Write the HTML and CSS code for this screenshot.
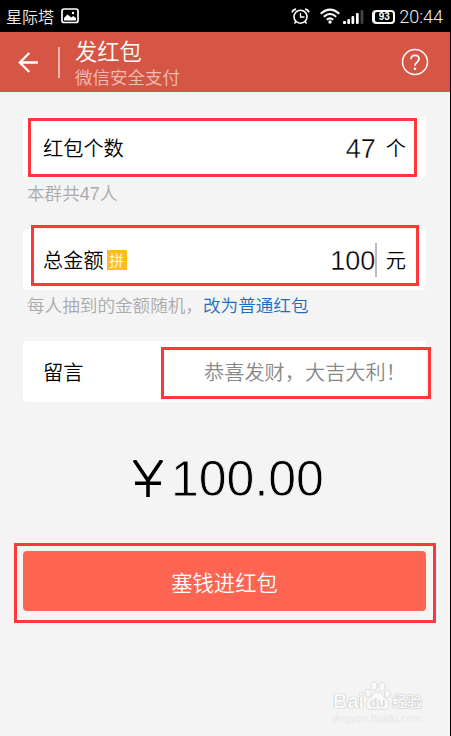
FILE: index.html
```html
<!DOCTYPE html>
<html lang="zh-CN">
<head>
<meta charset="utf-8">
<title>发红包</title>
<link rel="stylesheet" href="styles.css">
</head>
<body>
<div class="phone">
  <div class="status">
    <span class="carrier">星际塔</span>
    <svg class="photo" width="18" height="16" viewBox="0 0 18 16"><rect x="1" y="1" width="16" height="13.5" rx="2" fill="none" stroke="#fff" stroke-width="1.7"/><path d="M3 12V10l3.5-3.5 3.7 3 2-1.5L15 10v2.5H3z" fill="#fff"/><circle cx="12" cy="5" r="1.2" fill="#fff"/></svg>
    <svg class="alarm" width="19" height="17" viewBox="0 0 19 17" fill="none" stroke="#fff"><circle cx="9.5" cy="8.7" r="6.5" stroke-width="1.6"/><path d="M9.5 5v4h4" stroke-width="1.3"/><path d="M1 4.4Q2 1.6 5 1.2M18 4.4Q17 1.6 14 1.2" stroke-width="1.7"/><path d="M5 13.5l-1.5 2M14 13.5l1.5 2" stroke-width="1.5"/></svg>
    <svg class="wifi" width="20" height="16" viewBox="0 0 20 16" fill="none" stroke="#fff" stroke-width="2"><path d="M.7 5.7Q10-2.5 19.3 5.7M3.8 8.8Q10 3.2 16.2 8.8M6.8 11.7Q10 9 13.2 11.7"/><circle cx="10" cy="14" r="1.7" fill="#fff" stroke="none"/></svg>
    <svg class="signal" width="21" height="15" viewBox="0 0 21 15" fill="#fff"><rect y="12" width="3" height="3" rx="1"/><rect x="4.3" y="10" width="2.7" height="5" rx="1"/><rect x="8.5" y="7" width="2.7" height="8" rx="1"/><rect x="13" y="4" width="2.7" height="11" rx="1"/><rect x="17.6" y="1" width="2.8" height="14" rx="1" fill="#444"/></svg>
    <span class="battery">93</span>
    <span class="clock">20:44</span>
  </div>
  <header class="bar">
    <svg class="back" width="21" height="21" viewBox="0 0 21 21" fill="none" stroke="#fff" stroke-width="2.3"><path d="M20 10.5H2M11.3 1L1.8 10.5l9.5 9.5"/></svg>
    <span class="divider"></span>
    <div class="titles"><h1>发红包</h1><p>微信安全支付</p></div>
    <svg class="help" width="28" height="28" viewBox="0 0 28 28" fill="none" stroke="#fff"><circle cx="14" cy="14" r="12.5" stroke-width="1.5"/><path d="M10 11.2Q10 7.3 14 7.3T18 11Q18 12.8 16 14.3T14 17.7" stroke-width="1.7"/><circle cx="14" cy="20.7" r="1.3" fill="#fff" stroke="none"/></svg>
  </header>
  <main>
    <section class="card count">
      <span>红包个数</span><span class="num">47</span><span class="unit">个</span>
      <i class="mark mark-count"></i>
    </section>
    <p class="hint">本群共<span class="digits">47</span>人</p>
    <section class="card total">
      <span>总金额</span><b class="tag">拼</b><span class="num">100</span><i class="caret"></i><span class="unit">元</span>
      <i class="mark mark-total"></i>
    </section>
    <p class="hint">每人抽到的金额随机，<a>改为普通红包</a></p>
    <section class="card note">
      <span>留言</span><span class="wish">恭喜发财，大吉大利！</span>
      <i class="mark mark-note"></i>
    </section>
    <div class="amount"><svg width="30" height="37" viewBox="0 0 30 37" fill="none" stroke="#000" stroke-width="3.6"><path d="M1.2 0L15 20.5 28.8 0M15 20v17M2 23.2h26"/></svg><span>100.00</span></div>
    <div class="submit">塞钱进红包<i class="mark mark-submit"></i></div>
  </main>
  <div class="watermark">
    <div class="brand"><span class="latin">Bai</span><svg width="27" height="30" viewBox="0 0 27 30" fill="#f9f9f9" stroke="#ddd" stroke-width="1"><ellipse cx="4" cy="12" rx="3" ry="4"/><ellipse cx="10" cy="5" rx="3" ry="4.3"/><ellipse cx="18" cy="5.5" rx="3" ry="4.3"/><ellipse cx="23.5" cy="13" rx="3" ry="4"/><path d="M13.5 11C9 11 8 16 4.5 18.500C0 22 2 29 7 28.500Q13.500 27 20 28.500C25 29 27 22 22.500 18.500C19 16 18 11 13.500 11Z"/><text x="13.500" y="26" text-anchor="middle">du</text></svg><span class="cn">经验</span></div>
    <div class="site">jingyan.baidu.com</div>
  </div>
</div>
</body>
</html>
```
FILE: styles.css
```css
* { box-sizing: border-box; }
body, h1, p { margin: 0; font-weight: 350; }
body {
  width: 451px;
  height: 736px;
  overflow: hidden;
  font-family: "Noto Sans CJK SC DemiLight", "Noto Sans CJK SC", sans-serif;
  color: #000;
}
.phone {
  position: relative;
  height: 736px;
  border-right: 1px solid #000;
  background: #f4f4f4;
}
.status {
  display: flex;
  align-items: center;
  height: 32px;
  padding: 0 7px 0 6px;
  background: #000;
  color: #eee;
}
.carrier { font-size: 16px; line-height: 30px; margin-top: -1px; }
.photo { margin-left: 7px; }
.alarm { margin-left: auto; }
.wifi { margin-left: 10px; }
.signal { margin-left: 3px; }
.battery {
  width: 22px;
  height: 14px;
  margin: 2px 4px 0 9px;
  border: 2px solid #fff;
  border-radius: 4px;
  box-shadow: -1px 0 0 #fff;
  font: bold 10px/10px "Liberation Sans", sans-serif;
  text-align: center;
  color: #fff;
}
.clock { font: 300 18px/34px Roboto, sans-serif; padding-top: 2px; }
.bar {
  display: flex;
  align-items: center;
  height: 60px;
  padding: 0 21px 0 18px;
  background: #d65645;
  color: #fff;
}
.divider { width: 2px; height: 31px; margin: 0 15px 0 19px; background: #efb5ad; }
.titles h1 { font-size: 22.3px; line-height: 28px; }
.titles p { font-size: 17.5px; line-height: 25px; color: #f2bdb5; }
.help { margin-left: auto; }
main { padding: 25px 24px 0 23px; }
.card {
  position: relative;
  display: flex;
  align-items: center;
  height: 61px;
  padding: 0 20px;
  border-radius: 4px;
  background: #fff;
  font-size: 20.2px;
  line-height: 30px;
  white-space: nowrap;
}
.num {
  margin: 3px 0 0 auto;
  font: 27px/30px "Liberation Sans", sans-serif;
  -webkit-text-stroke: .4px #fff;
}
.unit { margin-left: 10px; }
.tag {
  width: 20px;
  height: 20px;
  margin-left: 3px;
  background: #ffba26;
  color: #fff;
  font-size: 14.5px;
  font-weight: 350;
  line-height: 19px;
  text-align: center;
}
.caret { width: 1.5px; height: 34px; background: #bbb; }
.total .unit { margin-left: 9px; }
.hint { height: 51px; padding-left: 4px; font-size: 17.6px; line-height: 30px; color: #aaa; }
.digits { font: 18px/20px "Liberation Sans", sans-serif; }
.hint a { color: #1d6cc0; }
.wish { width: 202px; margin-left: auto; color: #888; }
.mark { position: absolute; border: 3px solid #fd3838; }
.mark-count { left: 5px; top: 1px; width: 389px; height: 59px; }
.mark-total { left: 8px; top: -4px; width: 388px; height: 61px; }
.mark-note { left: 138px; top: 6px; width: 270px; height: 52px; }
.mark-submit { left: -9px; top: -8px; width: 422px; height: 80px; }
.amount {
  display: flex;
  align-items: center;
  height: 149px;
  padding: 4px 0 0 110px;
  font: 50px/60px "Liberation Sans", sans-serif;
}
.amount span { margin: 0 0 0 8px; -webkit-text-stroke: .8px #f4f4f4; }
.submit {
  position: relative;
  height: 60px;
  border-radius: 4px;
  background: #fd6552;
  color: #fff;
  font-size: 21.3px;
  line-height: 61px;
  text-align: center;
}
.watermark { position: absolute; left: 333px; top: 681px; width: 92px; color: #fafafa; }
.brand { display: flex; align-items: flex-end; height: 31px; text-shadow: 0 0 1px #aaa, 0 0 1px #bbb; }
.latin { font: bold 20px/22px "Liberation Sans", sans-serif; }
.brand svg { flex: none; margin: 0 1px 1px 0; }
.brand text { font: bold 13px "Liberation Sans", sans-serif; fill: #ddd; stroke: none; text-shadow: none; }
.cn { font-size: 15px; font-weight: 700; line-height: 22px; white-space: nowrap; }
.site { font: 11px/12px "Liberation Sans", sans-serif; color: #e7e7e7; white-space: nowrap; }
.note .wish { margin-right: 0; }
```
